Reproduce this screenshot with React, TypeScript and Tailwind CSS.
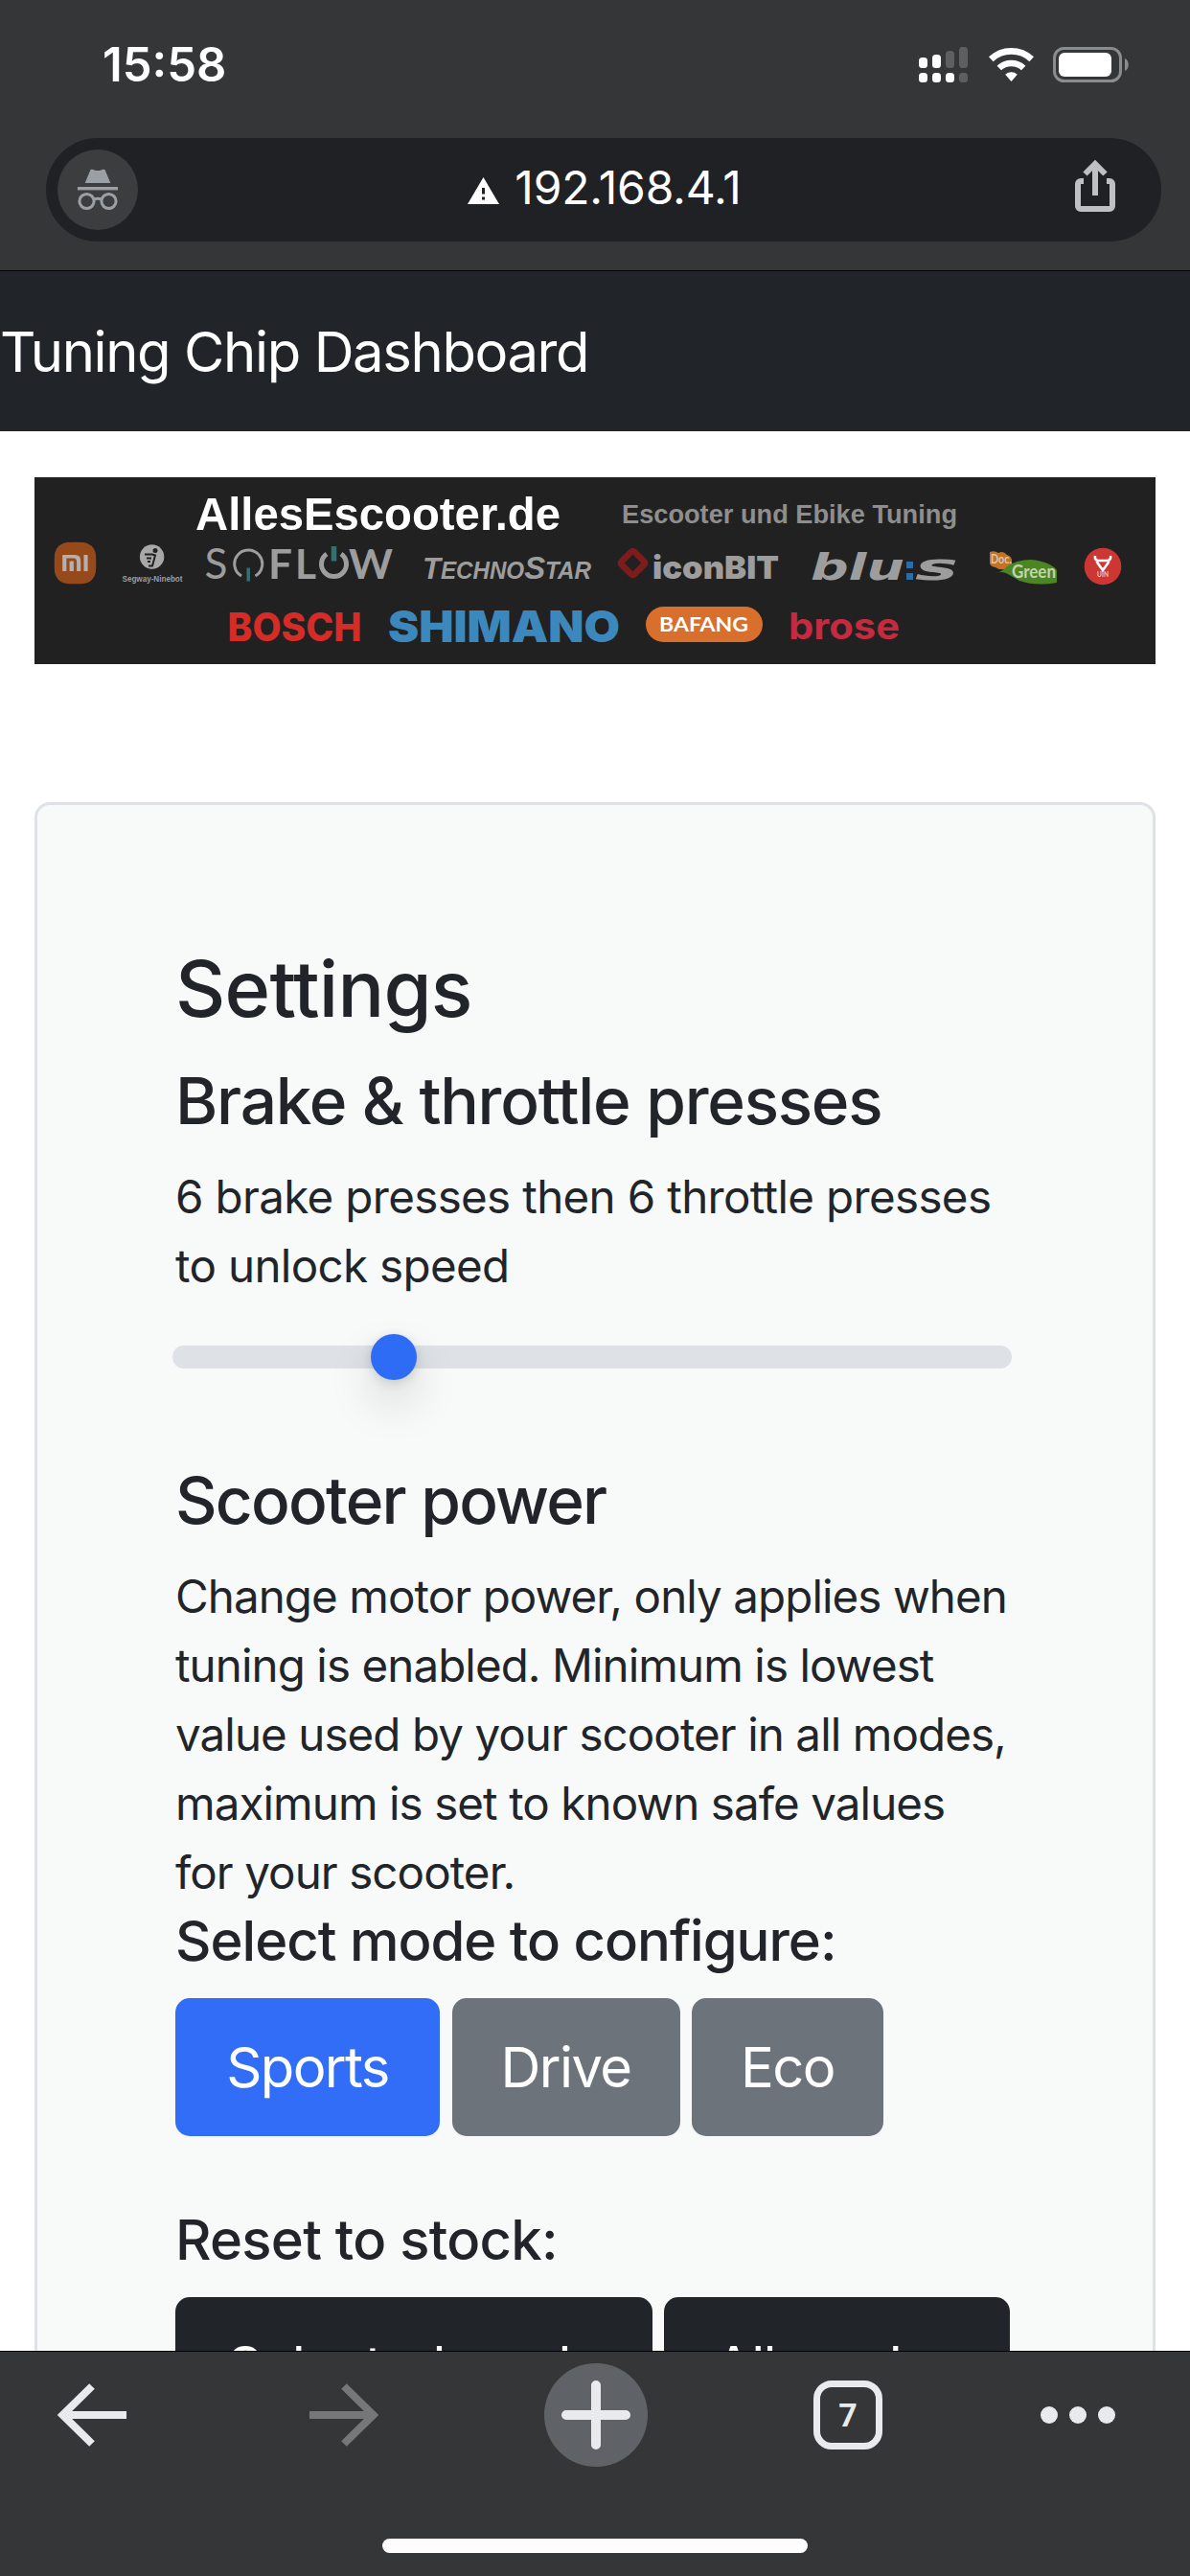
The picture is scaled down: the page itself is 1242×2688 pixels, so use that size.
import type { ReactNode } from 'react'
import { SiXiaomi } from 'react-icons/si'

const modes = ['Sports', 'Drive', 'Eco']

const powerLines = [
  'Change motor power, only applies when',
  'tuning is enabled. Minimum is lowest',
  'value used by your scooter in all modes,',
  'maximum is set to known safe values',
  'for your scooter.',
]

function StatusBar() {
  return (
    <div className="flex h-36 justify-between pl-[107px] pr-16 text-white">
      <span className="pt-[39px] text-[49px] leading-[58px] font-semibold">15:58</span>
      <svg className="mt-12 h-10 w-[220px]" viewBox="958 48 220 40" fill="white">
        {/* dual sim signal */}
        <rect x="959" y="60" width="9" height="11" rx="3.5" />
        <rect x="973" y="57" width="9" height="14" rx="3.5" />
        <rect x="987" y="53" width="9" height="18" rx="3.5" fill="#5e5f60" />
        <rect x="1001" y="49" width="9" height="22" rx="3.5" fill="#5e5f60" />
        <rect x="959" y="76" width="9" height="10" rx="3.5" />
        <rect x="973" y="76" width="9" height="10" rx="3.5" />
        <rect x="987" y="76" width="9" height="10" rx="3.5" />
        <rect x="1001" y="76" width="9" height="10" rx="3.5" fill="#5e5f60" />
        {/* wifi */}
        <path d="M1055.500 85l-6.300-7.300a9.300 9.300 0 0 1 12.600 0z" />
        <path d="M1042.800 71a18.500 18.500 0 0 1 25.400 0" fill="none" stroke="white" strokeWidth="6.500" />
        <path d="M1034.300 61.800a31 31 0 0 1 42.400 0" fill="none" stroke="white" strokeWidth="6.800" />
        {/* battery */}
        <rect x="1100.500" y="50.500" width="69" height="34" rx="10" fill="none" stroke="#8b8c8d" strokeWidth="3" />
        <rect x="1105" y="55" width="55" height="25" rx="6" />
        <path d="M1174 61c5 2 5 11 0 13z" fill="#8b8c8d" />
      </svg>
    </div>
  )
}

function AddressBar() {
  return (
    <div className="mr-[30px] ml-12 flex h-[108px] items-center justify-between rounded-full bg-[#202124] pr-12 pl-3">
      <div className="flex size-[84px] items-center justify-center rounded-full bg-[#3c3d3f]">
        <svg className="h-11 w-[42px]" viewBox="81 176 42 44" fill="#9aa0a6">
          <path d="M94.500 177q2-.8 4 .4 3.500 1.200 7 0 2-1.200 4-.4l5.800 14H88.700z" />
          <rect x="81" y="195" width="42" height="3.400" />
          <g fill="none" stroke="#9aa0a6" strokeWidth="3">
            <circle cx="90.500" cy="210" r="7.600" />
            <circle cx="113.500" cy="210" r="7.600" />
            <path d="M98 208q4-1.500 8 0" />
          </g>
        </svg>
      </div>
      <div className="flex items-center gap-4 pr-1">
        <svg className="mt-[2px] h-[28px] w-[33px]" viewBox="0 0 33 28">
          <path d="M16.500 0L33 28H0z" fill="white" />
          <path d="M16.500 11v6.500M16.500 20.500v3" stroke="#202124" strokeWidth="3" />
        </svg>
        <span className="-mt-1 text-[48px] leading-[58px] tracking-[-0.2px] text-white">192.168.4.1</span>
      </div>
      <svg className="-mt-2 h-[56px] w-[42px]" viewBox="1122 166 42 56" fill="none" stroke="#bdc1c6" strokeWidth="6">
        <path d="M1131 189h-3a3 3 0 0 0-3 3v23a3 3 0 0 0 3 3h30a3 3 0 0 0 3-3v-23a3 3 0 0 0-3-3h-3" />
        <path d="M1143 204v-32" />
        <path d="M1132.500 181.500l10.500-10.500 10.500 10.500" />
      </svg>
    </div>
  )
}

function BrandBanner() {
  return (
    <svg
      className="mx-9 mt-12 block h-[195px] w-[1170px] bg-[#212121]"
      viewBox="36 498 1170 195"
      fontFamily="'Liberation Sans', Arial, sans-serif"
      fontWeight="700"
      fill="#9d9d9d"
    >
      <text x="204" y="552.500" fontSize="49" fill="white" textLength="381" lengthAdjust="spacingAndGlyphs">AllesEscooter.de</text>
      <text x="649" y="545.500" fontSize="28.500" fill="#8e8e8e" textLength="350" lengthAdjust="spacingAndGlyphs">Escooter und Ebike Tuning</text>

      {/* Xiaomi */}
      <rect x="62" y="576" width="33" height="24" fill="#b5b0ac" />
      <SiXiaomi x="56.500" y="565.500" size={44} color="#96491b" />

      {/* Segway-Ninebot */}
      <circle cx="158.600" cy="581" r="12.700" fill="#a8a8a8" />
      <circle cx="162" cy="574.500" r="2.500" fill="#212121" />
      <path d="M151 578.500h8l3 1-3 11h-4M153 582.500h5M154 586h3" fill="none" stroke="#212121" strokeWidth="2" />
      <text x="127.500" y="606.500" fontSize="9.500" textLength="63" lengthAdjust="spacingAndGlyphs">Segway-Ninebot</text>

      {/* Soflow */}
      <g fontFamily="Lato, sans-serif">
        <text x="213.500" y="604" fontSize="44" fontWeight="400" textLength="24" lengthAdjust="spacingAndGlyphs">S</text>
        <text x="280" y="604" fontSize="42" fontWeight="700" textLength="25" lengthAdjust="spacingAndGlyphs">F</text>
        <text x="308" y="604" fontSize="42" fontWeight="700" textLength="22" lengthAdjust="spacingAndGlyphs">L</text>
        <text x="364" y="604" fontSize="42" fontWeight="700" textLength="46" lengthAdjust="spacingAndGlyphs">W</text>
      </g>
      <path d="M252 601a14.500 14.500 0 1 1 14.500 0" fill="none" stroke="#9d9d9d" strokeWidth="3" />
      <path d="M259.200 592.500v14" stroke="#347070" strokeWidth="3.500" />
      <path d="M341 578a13 13 0 1 0 15 0" fill="none" stroke="#9d9d9d" strokeWidth="5" />
      <path d="M348.500 570v15.500" stroke="#347070" strokeWidth="5.500" />

      {/* TechnoStar */}
      <text x="441" y="603.500" fontStyle="italic" fontSize="25" textLength="176" lengthAdjust="spacingAndGlyphs">
        <tspan fontSize="32">T</tspan>ECHNO<tspan fontSize="34">S</tspan>TAR
      </text>

      {/* iconBIT */}
      <rect x="651" y="578" width="19" height="19" rx="2" transform="rotate(45 660.500 587.500)" fill="none" stroke="#7d1c1c" strokeWidth="6.500" />
      <text x="681" y="604" fontFamily="Inter, sans-serif" fontWeight="900" fontSize="33" textLength="132" lengthAdjust="spacingAndGlyphs">iconBIT</text>

      {/* blu:s */}
      <g fontFamily="'DejaVu Sans', sans-serif" fontSize="37" fontStyle="italic">
        <text x="846" y="605" textLength="98" lengthAdjust="spacingAndGlyphs">blu</text>
        <text x="955" y="605" textLength="45" lengthAdjust="spacingAndGlyphs">s</text>
      </g>
      <path d="M946 586h7v7h-7zM946 598h7v7h-7z" fill="#2c6da3" />

      {/* Doc Green */}
      <path d="M1033 576q5-2 9 1 5-3 9 2 6 2 5 8 2 6-4 6-8 3-13-1-7-1-6-7z" fill="#c27324" />
      <path d="M1038 598q8-1 12-6 10-8 26-8 20 2 27 11v13q-22 4-39-2-10-6-14-8-6-2-12 0z" fill="#4c8523" />
      <text x="1034" y="588" fontFamily="Lato, sans-serif" fontSize="13" fill="#d9c9b3" textLength="22" lengthAdjust="spacingAndGlyphs">Doc.</text>
      <text x="1056" y="602.500" fontFamily="Lato, sans-serif" fontSize="18" fill="#c3d3b2" textLength="46" lengthAdjust="spacingAndGlyphs">Green</text>

      {/* Niu */}
      <circle cx="1151" cy="591" r="19.300" fill="#cd3733" />
      <path d="M1143 580q-1 4 3 5h10q4-1 3-5M1144.500 586l6.500 9 6.500-9" fill="none" stroke="white" strokeWidth="2.600" />
      <text x="1145" y="602" fontFamily="Lato, sans-serif" fontSize="7" fill="#f0c4c2" textLength="12" lengthAdjust="spacingAndGlyphs">UIN</text>

      {/* e-bike motors */}
      <text x="237.500" y="668.500" fontFamily="Inter, sans-serif" fontWeight="800" fontSize="41" fill="#d52c27" textLength="140" lengthAdjust="spacingAndGlyphs">BOSCH</text>
      <text x="405" y="670" fontFamily="Inter, sans-serif" fontWeight="900" fontSize="46" fill="#3c87bb" textLength="242" lengthAdjust="spacingAndGlyphs">SHIMANO</text>
      <rect x="674" y="633" width="122" height="37" rx="18.500" fill="#d96f2c" />
      <text x="688" y="659" fontFamily="Lato, sans-serif" fontSize="21.500" fill="white" textLength="93" lengthAdjust="spacingAndGlyphs">BAFANG</text>
      <text x="823" y="667" fontFamily="Inter, sans-serif" fontWeight="700" fontSize="38" fill="#c42a40" textLength="116" lengthAdjust="spacingAndGlyphs">brose</text>
    </svg>
  )
}

function PresetButton({ className, children }: { className: string; children: ReactNode }) {
  return (
    <button className={`h-36 shrink-0 rounded-[15px] text-[58px] leading-[90px] tracking-[-1.6px] text-white ${className}`}>
      {children}
    </button>
  )
}

function SettingsCard() {
  return (
    <main className="mx-9 mt-36 rounded-t-[16px] border-[3px] border-b-0 border-[#dee2e6] bg-[#f8faf9] px-36 pt-[142px] text-[#212529]">
      <h1 className="mb-6 text-[81px] leading-[101px] font-medium tracking-[-0.75px]">Settings</h1>

      <h3 className="mb-[23px] text-[67.5px] leading-[83px] font-medium tracking-[-1.25px]">Brake &amp; throttle presses</h3>
      <p className="text-[47.5px] leading-[72px] tracking-[-0.65px] whitespace-nowrap">
        6 brake presses then 6 throttle presses
        <br />
        to unlock speed
      </p>
      <div className="mt-[35px] -ml-[3px] flex h-12 w-[876px] items-center">
        <div className="flex h-6 w-full items-center rounded-full bg-[#dee1e6] pl-[207px]">
          <div className="size-12 rounded-full bg-[#2f6cf6] shadow-[0_24px_48px_rgba(0,0,0,0.15),0_3px_12px_rgba(0,0,0,0.15)]" />
        </div>
      </div>

      <h3 className="mt-[84px] mb-[23px] text-[67.5px] leading-[83px] font-medium tracking-[-1.75px]">Scooter power</h3>
      <p className="text-[47.5px] leading-[72px] tracking-[-0.92px] whitespace-nowrap">
        {powerLines.map((line) => (
          <span key={line} className="block">{line}</span>
        ))}
      </p>

      <h5 className="mb-[25px] text-[58px] leading-[70px] font-medium tracking-[-1px]">Select mode to configure:</h5>
      <div className="flex gap-[12.5px]">
        <PresetButton className="w-[276px] bg-[#316df6]">{modes[0]}</PresetButton>
        <PresetButton className="w-[238px] bg-[#6c737b]">{modes[1]}</PresetButton>
        <PresetButton className="w-[200px] bg-[#6c737b]">{modes[2]}</PresetButton>
      </div>

      <h5 className="mt-[73px] mb-[25px] text-[58px] leading-[70px] font-medium tracking-[-0.75px]">Reset to stock:</h5>
      <div className="flex gap-3">
        <PresetButton className="w-[498px] bg-[#212529]">Selected mode</PresetButton>
        <PresetButton className="w-[361px] bg-[#212529]">All modes</PresetButton>
      </div>
    </main>
  )
}

function BottomBar() {
  return (
    <footer className="h-[235px] shrink-0 border-t border-black bg-[#353637]">
      <div className="flex h-[132px] items-center justify-between pr-[78px] pl-[60px]">
        <svg className="h-[68px] w-[72px]" viewBox="0 0 72 68" fill="none" stroke="#e8eaed" strokeWidth="8">
          <path d="M36 4L5.500 34 36 64M6 34h66" />
        </svg>
        <svg className="ml-[72px] h-[68px] w-[72px]" viewBox="0 0 72 68" fill="none" stroke="#767778" strokeWidth="8">
          <path d="M36 4l30.500 30L36 64M66 34H0" />
        </svg>
        <div className="ml-[54px] flex size-[108px] items-center justify-center rounded-full bg-[#5f6368]">
          <svg className="size-[72px]" viewBox="0 0 72 72" stroke="#e8eaed" strokeWidth="10" strokeLinecap="round">
            <path d="M36 5v62M5 36h62" />
          </svg>
        </div>
        <div className="ml-[54px] flex size-[72px] items-center justify-center rounded-[19px] border-[7.500px] border-[#e8eaed] font-[Roboto,sans-serif] text-[34px] font-bold text-[#e8eaed]">
          7
        </div>
        <div className="ml-[46px] flex gap-3">
          <i className="size-[18px] rounded-full bg-[#e8eaed]" />
          <i className="size-[18px] rounded-full bg-[#e8eaed]" />
          <i className="size-[18px] rounded-full bg-[#e8eaed]" />
        </div>
      </div>
      <div className="mx-auto mt-[63px] h-[15px] w-[444px] rounded-full bg-[#fdfdfd]" />
    </footer>
  )
}

export default function App() {
  return (
    <div className="flex h-[2688px] w-[1242px] flex-col overflow-hidden bg-white font-['Inter',sans-serif]">
      <header className="h-[283px] shrink-0 border-b border-black bg-[#353637]">
        <StatusBar />
        <AddressBar />
      </header>
      <div className="h-[2170px] shrink-0 overflow-hidden">
        <nav className="flex h-[167px] items-center bg-[#212529] text-[58px] leading-[70px] tracking-[-1.4px] whitespace-nowrap text-white">
          Tuning Chip Dashboard
        </nav>
        <BrandBanner />
        <SettingsCard />
      </div>
      <BottomBar />
    </div>
  )
}
